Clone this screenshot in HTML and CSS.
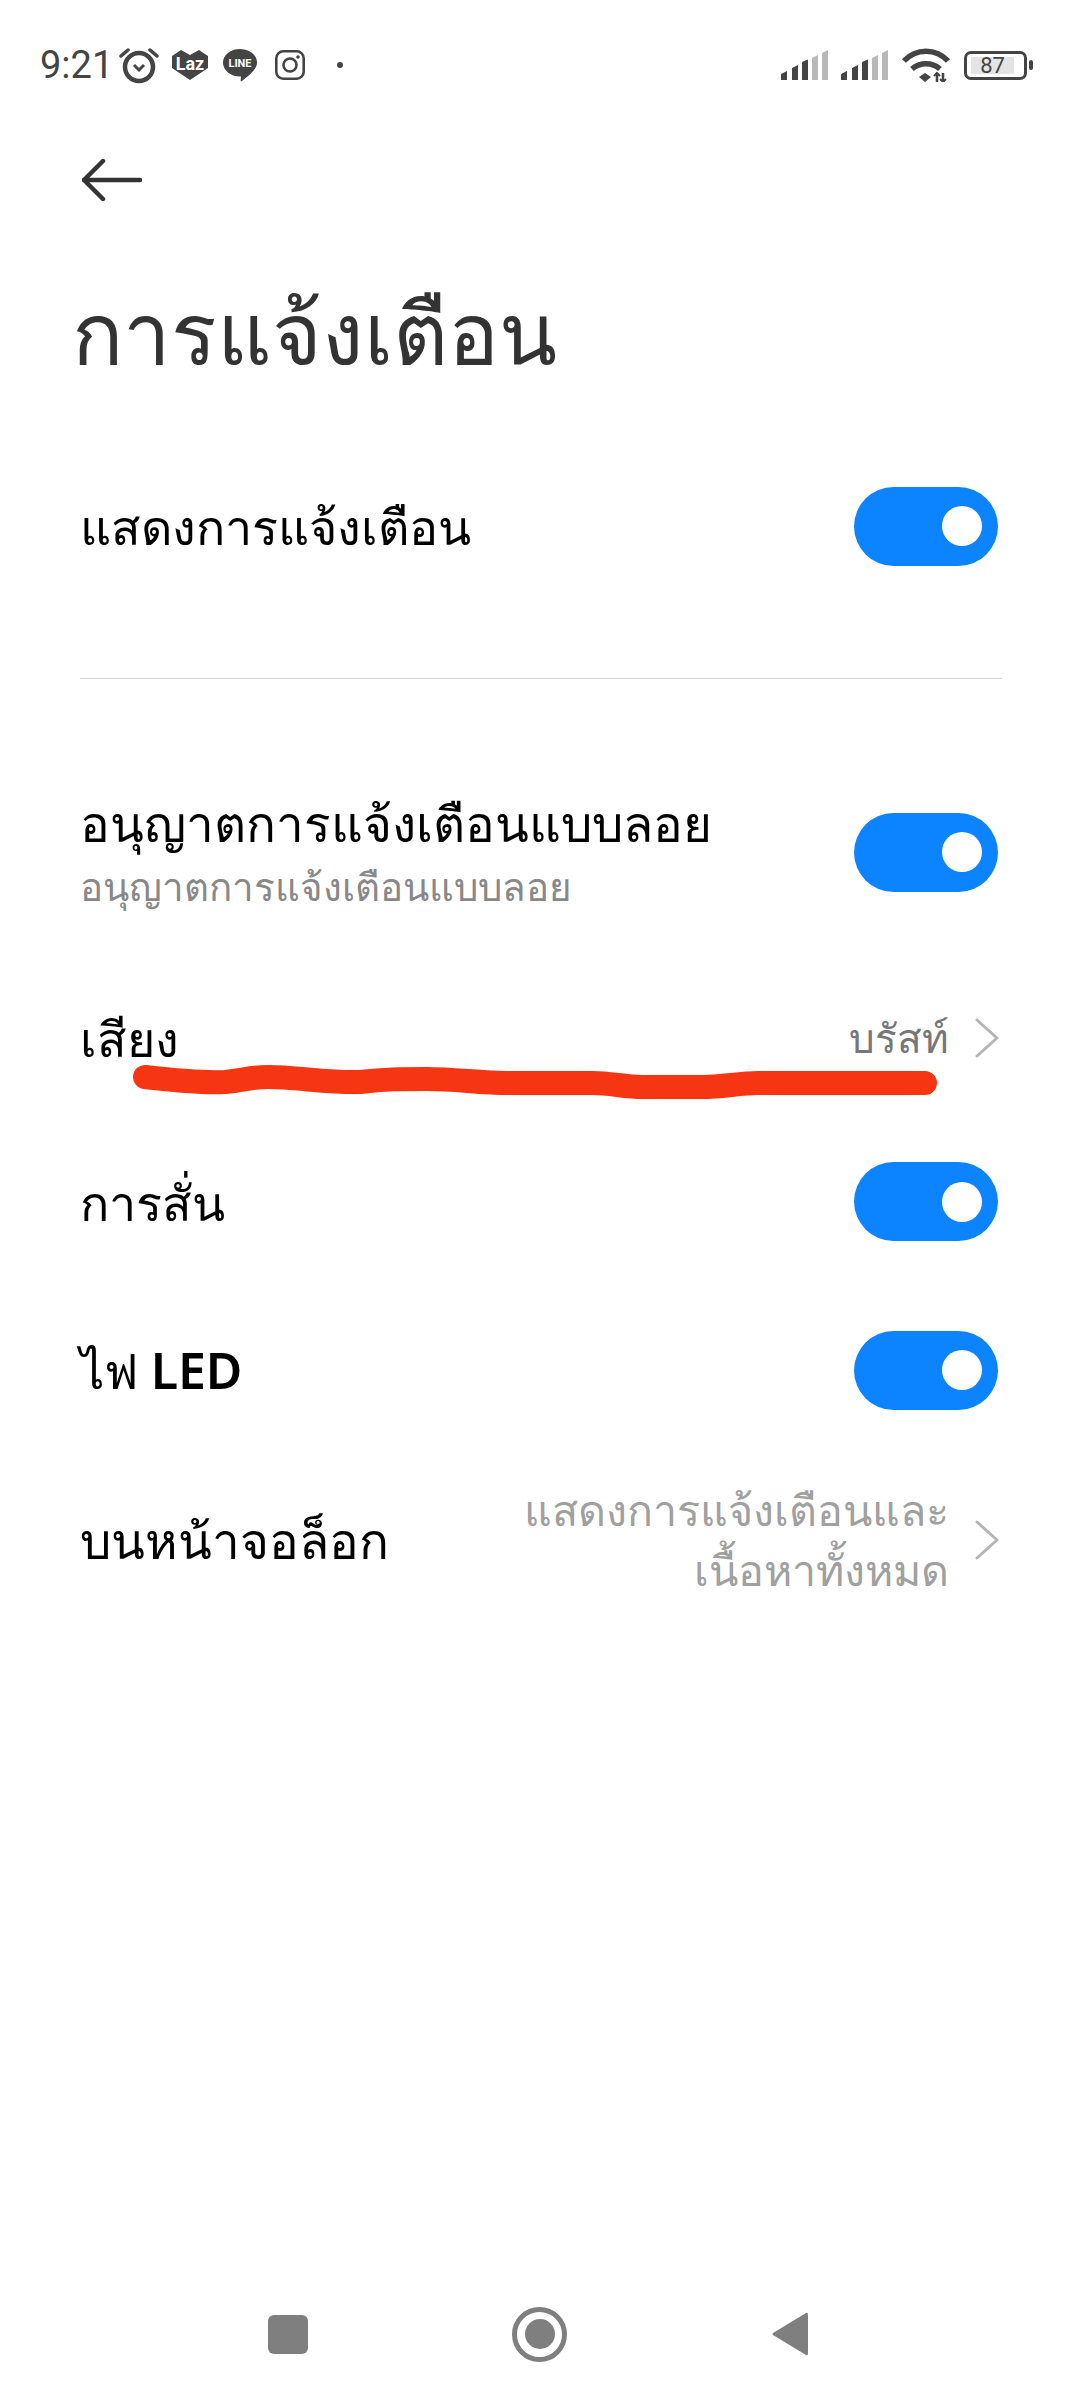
FILE: index.html
```html
<!DOCTYPE html>
<html lang="th">
<head>
  <meta charset="UTF-8" />
  <title>การแจ้งเตือน</title>
  <link rel="stylesheet" href="styles.css">
</head>
<body>
  <div class="page">
    <div class="status-bar">
      <div class="status-left">
        <span class="time">9:21</span>
        <svg class="ic-alarm" width="40" height="38" viewBox="0 0 40 38" fill="none" stroke="#444">
          <circle cx="20" cy="21" r="14" stroke-width="4.5"/>
          <path d="M15 19l5 5 5-5" stroke-width="3"/>
          <path d="M2 10l7-6M38 10l-7-6" stroke-width="3.5" stroke-linecap="round"/>
        </svg>
        <svg class="ic-laz" width="36" height="30" viewBox="0 0 36 30">
          <path d="M0 6L9 0l9 5 9-5 9 6v12L18 30 0 18z" fill="#444"/>
          <text x="18" y="20" text-anchor="middle" class="logo-text laz-text">Laz</text>
        </svg>
        <svg class="ic-line" width="34" height="33" viewBox="0 0 34 33">
          <path d="M17 0c9.400 0 17 6 17 13.500 0 7-8 13-15 18.500-1 .8-1.500.5-1.300-.8l.3-3.700C8 28 0 21.500 0 13.500 0 6 7.600 0 17 0z" fill="#444"/>
          <text x="17" y="18" text-anchor="middle" class="logo-text line-text">LINE</text>
        </svg>
        <svg class="ic-insta" width="30" height="30" viewBox="0 0 30 30" fill="none" stroke="#444" stroke-width="2.600">
          <rect x="1.300" y="1.300" width="27.400" height="27.400" rx="7"/>
          <circle cx="15" cy="15" r="6.500"/>
          <circle cx="23" cy="7" r="1.800" fill="#444" stroke="none"/>
        </svg>
        <span class="dot"></span>
      </div>
      <div class="status-right">
        <svg class="ic-signal" width="47" height="30" viewBox="0 0 47 30">
          <path d="M0 24l6-3v9H0zM11 18l6-3v15h-6zM21 13q0-1 1-1.500l5-2V30h-6z" fill="#444"/>
          <path d="M31 8l6-3v25h-6zM41 3l6-3v30h-6z" fill="#b8b8b8"/>
        </svg>
        <svg class="ic-signal second" width="47" height="30" viewBox="0 0 47 30">
          <path d="M0 24l6-3v9H0zM11 18l6-3v15h-6zM21 13q0-1 1-1.500l5-2V30h-6z" fill="#444"/>
          <path d="M31 8l6-3v25h-6zM41 3l6-3v30h-6z" fill="#b8b8b8"/>
        </svg>
        <svg class="ic-wifi" width="48" height="34" viewBox="0 0 48 34" fill="none" stroke="#444" stroke-width="5.500">
          <path d="M2 13C14 0 34 0 46 13"/>
          <path d="M10 21c8-7 20-7 28 0"/>
          <path d="M17 29l6-4 6 4-6 5z" fill="#444" stroke="none"/>
          <path d="M35 34v-9M41 34v-9" stroke-width="2.500"/>
          <path d="M32 28l3-3 3 3M38 31l3 3 3-3" stroke-width="2"/>
        </svg>
        <div class="battery">
          <span class="battery-level">87</span>
        </div>
        <span class="battery-nub"></span>
      </div>
    </div>

    <div class="back">
      <svg width="60" height="42" viewBox="0 0 60 42" fill="none" stroke="#333" stroke-width="4.500" stroke-linecap="round" stroke-linejoin="round">
        <path d="M21 2L2 21l19 19M2 21h56"/>
      </svg>
    </div>

    <h1 class="title">การแจ้งเตือน</h1>

    <div class="row">
      <div class="row-label">แสดงการแจ้งเตือน</div>
      <div class="toggle"><span class="knob"></span></div>
    </div>

    <div class="divider"></div>

    <div class="row row-sub">
      <div>
        <div class="row-label">อนุญาตการแจ้งเตือนแบบลอย</div>
        <div class="row-desc">อนุญาตการแจ้งเตือนแบบลอย</div>
      </div>
      <div class="toggle"><span class="knob"></span></div>
    </div>

    <div class="row row-sound">
      <div class="row-label">เสียง</div>
      <div class="row-end">
        <span class="row-value dark">บรัสท์</span>
        <svg class="chevron" width="24" height="40" viewBox="0 0 24 40" fill="none" stroke="#b5b5b5" stroke-width="3" stroke-linecap="round" stroke-linejoin="round">
          <path d="M2 2l20 18L2 38"/>
        </svg>
      </div>
    </div>

    <div class="row row-mid">
      <div class="row-label">การสั่น</div>
      <div class="toggle"><span class="knob"></span></div>
    </div>

    <div class="row row-big">
      <div class="row-label">ไฟ <span class="latin">LED</span></div>
      <div class="toggle"><span class="knob"></span></div>
    </div>

    <div class="row row-lock">
      <div class="row-label">บนหน้าจอล็อก</div>
      <div class="row-end">
        <span class="row-value">แสดงการแจ้งเตือนและ<br>เนื้อหาทั้งหมด</span>
        <svg class="chevron" width="24" height="40" viewBox="0 0 24 40" fill="none" stroke="#b5b5b5" stroke-width="3" stroke-linecap="round" stroke-linejoin="round">
          <path d="M2 2l20 18L2 38"/>
        </svg>
      </div>
    </div>

    <div class="nav-bar">
      <span class="nav-square"></span>
      <span class="nav-home"><span></span></span>
      <svg width="38" height="46" viewBox="0 0 38 46">
        <path d="M35 2L2 22q-1 1 0 2l33 20q2 1 2-2V4q0-3-2-2z" fill="#7f7f7f"/>
      </svg>
    </div>

    <!-- red marker scribbled over the screenshot -->
    <svg class="scribble" width="1080" height="2400" viewBox="0 0 1080 2400" fill="none">
      <path d="M145 1077C180 1081 205 1083 225 1082C245 1080 250 1077 268 1077C295 1077 330 1083 360 1082C385 1079 400 1079 427 1079C455 1079 480 1083 507 1083H593C610 1083 625 1087 642 1087H703C722 1087 740 1083 758 1083H925" stroke="#f63612" stroke-width="24" stroke-linecap="round" stroke-linejoin="round"/>
    </svg>
  </div>
</body>
</html>
```

FILE: styles.css
```css
* {
  box-sizing: border-box;
}

body {
  margin: 0;
  background: #fff;
  font-family: "Noto Sans", "DejaVu Sans", sans-serif;
}

.page {
  position: relative;
  width: 1080px;
  height: 2400px;
  display: flex;
  flex-direction: column;
  overflow: hidden;
  background: #fff;
}

/* status bar */
.status-bar {
  height: 130px;
  padding: 0 47px 0 40px;
  display: flex;
  justify-content: space-between;
  align-items: center;
}

.status-left,
.status-right {
  display: flex;
  align-items: center;
}

.time {
  font-family: Roboto, sans-serif;
  font-size: 38px;
  color: #444;
  margin-right: 6px;
}

.ic-laz {
  margin-left: 13px;
}

.ic-line {
  margin-left: 15px;
}

.ic-insta {
  margin-left: 18px;
}

.logo-text {
  font-family: Roboto, sans-serif;
  font-weight: 700;
  fill: #fff;
}

.laz-text {
  font-size: 18px;
}

.line-text {
  font-size: 11px;
}

.dot {
  width: 6px;
  height: 6px;
  margin-left: 32px;
  border-radius: 50%;
  background: #444;
}

.ic-signal.second {
  margin-left: 13px;
}

.ic-wifi {
  margin-left: 14px;
}

.battery {
  width: 63px;
  height: 29px;
  margin-left: 14px;
  padding: 3px 10px 3px 4px;
  border: 3px solid #444;
  border-radius: 7px;
}

.battery-level {
  display: block;
  height: 17px;
  background: #e4e4e4;
  font-family: Roboto, sans-serif;
  font-size: 22px;
  line-height: 17px;
  color: #444;
  text-align: center;
}

.battery-nub {
  width: 4px;
  height: 10px;
  margin-left: 2px;
  border-radius: 2px;
  background: #444;
}

/* header */
.back {
  height: 42px;
  margin: 29px 0 0 82px;
}

.back svg {
  display: block;
}

.title {
  margin: 80px 0 5px 72px;
  height: 160px;
  font-size: 85px;
  font-weight: 400;
  line-height: 100px;
  color: #333;
}

/* rows */
.row {
  height: 160px;
  padding: 0 82px 0 80px;
  display: flex;
  justify-content: space-between;
  align-items: center;
  flex: none;
}

.row-sub {
  height: 216px;
  margin-top: 65px;
}

.row-sound {
  padding-bottom: 5px;
}

.row-mid {
  height: 163px;
}

.row-big {
  height: 174px;
}

.row-lock {
  height: 166px;
}

.row-label {
  font-size: 48.500px;
  line-height: 60px;
  color: #000;
}

.row-sub .row-label,
.row-lock .row-label {
  font-size: 49.500px;
}

.latin {
  font-size: 50px;
  font-weight: 600;
}

.row-desc {
  margin-top: 8px;
  font-size: 38.500px;
  line-height: 50px;
  color: #888;
}

.row-end {
  display: flex;
  align-items: center;
  gap: 26px;
}

.row-value {
  font-size: 43px;
  line-height: 60px;
  color: #a0a0a0;
  text-align: right;
}

.row-value.dark {
  font-size: 40.500px;
  color: #777;
}

.chevron {
  flex: none;
  margin-right: -1px;
}

.toggle {
  width: 144px;
  height: 79px;
  padding-right: 16px;
  display: flex;
  justify-content: flex-end;
  align-items: center;
  flex: none;
  border-radius: 40px;
  background: #0d84ff;
}

.knob {
  width: 40px;
  height: 40px;
  border-radius: 50%;
  background: #fff;
}

.divider {
  height: 1px;
  margin: 72px 78px 0 80px;
  flex: none;
  background: #d8d8d8;
}

/* navigation */
.nav-bar {
  margin-top: auto;
  height: 132px;
  padding: 0 271px 0 268px;
  display: flex;
  justify-content: space-between;
  align-items: center;
}

.nav-bar svg {
  display: block;
}

.nav-square {
  width: 40px;
  height: 39px;
  border-radius: 6px;
  background: #7f7f7f;
}

.nav-home {
  width: 55px;
  height: 55px;
  display: flex;
  justify-content: center;
  align-items: center;
  border: 5px solid #7f7f7f;
  border-radius: 50%;
}

.nav-home span {
  width: 30px;
  height: 30px;
  border-radius: 50%;
  background: #7f7f7f;
}

.scribble {
  position: absolute;
  top: 0;
  left: 0;
  pointer-events: none;
}
```
